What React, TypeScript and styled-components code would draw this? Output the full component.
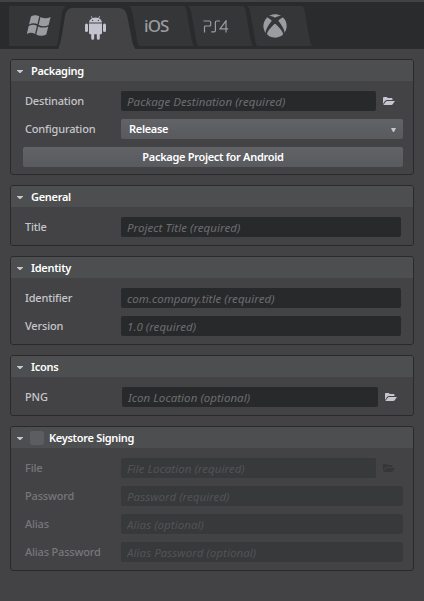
import React from 'react';
import styled, { createGlobalStyle, css } from 'styled-components';
import { FaXbox } from 'react-icons/fa';

const GlobalStyle = createGlobalStyle`
  * { box-sizing: border-box; }
  body { margin: 0; background: #434345; }
  button, input { font: inherit; }
`;

const Window = styled.main`
  width: 424px;
  height: 601px;
  overflow: hidden;
  background: #434345;
  color: #c6c6cc;
  font: 500 11px/20px 'Noto Sans', 'Open Sans', sans-serif;
`;

const TabBar = styled.nav`
  display: flex;
  align-items: flex-start;
  height: 47px;
  margin-top: 2px;
  padding: 0 0 0 9px;
  background: #2a2b2d;
`;

const Shell = styled.div`
  display: flow-root;
`;

const TabButton = styled.button<{ $width: number; $overlap: number; $active?: boolean }>`
  position: relative;
  z-index: ${p => (p.$active ? 1 : 0)};
  flex: none;
  width: ${p => p.$width}px;
  height: 47px;
  margin: 0 0 0 -${p => p.$overlap}px;
  padding: 0;
  border: 0;
  background: none;
  color: ${p => (p.$active ? '#c3c4d0' : '#9b9ca2')};
`;

const TabShape = styled.svg`
  position: absolute;
  inset: 0;
  display: block;
`;

const TabFace = styled.span<{ $left: number; $top: number }>`
  position: relative;
  display: block;
  height: 47px;
  padding: ${p => p.$top}px 0 0 ${p => p.$left}px;
  text-align: left;
  svg { display: block; }
`;

const IosText = styled.span`
  display: block;
  font: 500 17px/22px 'Noto Sans', sans-serif;
  letter-spacing: -0.9px;
`;

const Stack = styled.div`
  display: flex;
  flex-direction: column;
  gap: 10px;
  padding: 10px 10px 0;
`;

const Panel = styled.section`
  border: 1px solid #2a2a2c;
  border-radius: 3px;
  overflow: hidden;
`;

const PanelHeader = styled.header`
  display: flex;
  align-items: center;
  height: 21px;
  padding-left: 6px;
  background: #4d4e50;
  color: #fff;
`;

const Caret = styled.svg`
  flex: none;
  margin: 1px 8px 0 0;
  fill: #c6c6cc;
`;

const CheckBox = styled.span`
  width: 14px;
  height: 14px;
  margin: 0 5px 0 -1px;
  border-radius: 2px;
  background: #5c5d61;
`;

const Heading = styled.h2`
  margin: 0;
  font: 600 11px/21px 'Noto Sans', sans-serif;
  letter-spacing: -0.3px;
  white-space: nowrap;
`;

const PanelBody = styled.div<{ $bottom?: number; $disabled?: boolean }>`
  display: flex;
  flex-direction: column;
  gap: 8px;
  padding: 10px 10px ${p => p.$bottom ?? 8}px 12px;
  ${p => p.$disabled && css`color: #77777b;`}
`;

const Row = styled.div<{ $shift?: number }>`
  display: grid;
  grid-template-columns: ${p => 98 + (p.$shift ?? 0)}px auto 1fr;
  height: 20px;
`;

const Label = styled.label`
  padding-left: 2px;
  letter-spacing: -0.18px;
  white-space: nowrap;
`;

const Input = styled.input<{ $width: number }>`
  width: ${p => p.$width}px;
  height: 20px;
  padding: 2px 6px 0;
  border: 0;
  border-radius: 2px;
  background: #28292b;
  color: #c6c6cc;
  font-size: 11.5px;
  font-weight: 400;
  letter-spacing: 0.05px;
  &::placeholder { color: #6d6d70; font-style: italic; opacity: 1; }
  &:disabled { background: #38393b; }
  &:disabled::placeholder { color: #535356; }
`;

const raised = css`
  height: 20px;
  border: 0;
  border-radius: 2px;
  background: linear-gradient(#626367, #595a5e);
  color: #fff;
  font-weight: 600;
  letter-spacing: -0.3px;
`;

const Select = styled.button`
  ${raised}
  display: flex;
  justify-content: space-between;
  align-items: center;
  width: 282px;
  padding: 0 7px 0 8px;
  line-height: 20px;
`;

const SelectArrow = styled.svg`
  flex: none;
  margin-top: 1px;
  fill: #c6c6cc;
`;

const ActionButton = styled.button`
  ${raised}
  width: 380px;
  padding: 0;
  line-height: 20px;
`;

const FolderButton = styled.button`
  display: flex;
  padding: 6px 0 0 6px;
  border: 0;
  background: none;
  color: #c6c6d0;
  &:disabled { color: #353638; }
`;

const FolderIcon = () => (
  <svg width="14" height="9" viewBox="0 0 14 9" fill="currentColor">
    <path d="M1 7V1Q1 0 2 0H4.5Q5.5 0 5.5 1H9.5Q10.5 1 10.5 2V3H5Q3.8 3 3 4Z" />
    <path d="M5 4H13L10.7 7.3Q10.2 8 9.2 8H1.3L3.9 4.6Q4.3 4 5 4Z" />
  </svg>
);

const WindowsIcon = () => (
  <svg width="24" height="22" viewBox="0 0 24 22" fill="currentColor">
    <path d="M4 1.5Q8-1 12.3 1.3L10.4 9.2Q6.4 7 2 9.6Z" />
    <path d="M13.5 2Q18.6 4.6 23.6 2L21.6 10Q16.9 12.4 11.6 9.9Z" />
    <path d="M1.7 11Q5.8 8.5 10 10.7L8 19Q4 16.7-.2 19.1Z" />
    <path d="M11.2 11.4Q16.3 13.8 21.3 11.4L19.3 19.5Q14.2 22 9.2 19.6Z" />
  </svg>
);

const AndroidIcon = () => (
  <svg width="21" height="24" viewBox="0 0 21 24" fill="currentColor">
    <path d="M4 6.6C4.2 4.5 5.4 3 7.1 2.2L5.8.4L6.3 0L7.7 1.9Q10.5 1 13.3 1.9L14.7 0L15.2.4L13.9 2.2C15.6 3 16.8 4.5 17 6.6Z" />
    <path d="M4 7.6H17V17Q17 18.2 15.8 18.2H14.8V22.2Q14.8 23.7 13.3 23.7T11.8 22.2V18.2H9.2V22.2Q9.2 23.7 7.7 23.7T6.2 22.2V18.2H5.2Q4 18.2 4 17Z" />
    <rect y="7.5" width="3" height="8.5" rx="1.5" />
    <rect x="18" y="7.5" width="3" height="8.5" rx="1.5" />
    <circle cx="7.6" cy="4.4" r=".65" fill="#434345" />
    <circle cx="13.4" cy="4.4" r=".65" fill="#434345" />
  </svg>
);

const PlayStationIcon = () => (
  <svg width="26" height="13" viewBox="0 0 26 13" fill="none" stroke="currentColor" strokeWidth="1.2">
    <path d="M.5 1H6.4Q7.7 1 7.7 2.3V4.8Q7.7 6 6.4 6H2.5Q1.5 6 1.5 7V12.4" />
    <path d="M17 1H13.6Q12.4 1 12.4 2.2V10.5Q12.4 11.8 11.2 11.8H8.2" />
    <path d="M23 12.4V.8L17 8.8H25.2" />
  </svg>
);

type FieldProps = {
  label: string;
  hint: string;
  width: number;
  browse?: boolean;
  disabled?: boolean;
  shift?: number;
};

function Field({ label, hint, width, browse, disabled, shift }: FieldProps) {
  return (
    <Row $shift={shift}>
      <Label>{label}</Label>
      <Input $width={width} placeholder={hint} disabled={disabled} />
      {browse && <FolderButton disabled={disabled}><FolderIcon /></FolderButton>}
    </Row>
  );
}

type GroupProps = {
  title: string;
  checkbox?: boolean;
  bottom?: number;
  disabled?: boolean;
  children: React.ReactNode;
};

function Group({ title, checkbox, bottom, disabled, children }: GroupProps) {
  return (
    <Panel>
      <PanelHeader>
        <Caret width="6" height="3" viewBox="0 0 6 3"><path d="M0 0H6V.6L3.5 3H2.5L0 .6Z" /></Caret>
        {checkbox && <CheckBox />}
        <Heading>{title}</Heading>
      </PanelHeader>
      <PanelBody $bottom={bottom} $disabled={disabled}>{children}</PanelBody>
    </Panel>
  );
}

const slanted = 'M0 4H54Q56.5 4 57.3 7L61.5 32Q62.8 40 65 44H11Q9.2 44 8.3 39L3 9Q2 5 0 4Z';

type TabProps = {
  width: number;
  overlap: number;
  shape: string;
  left: number;
  top: number;
  active?: boolean;
  children: React.ReactNode;
};

function Tab({ width, overlap, shape, left, top, active, children }: TabProps) {
  return (
    <TabButton $width={width} $overlap={overlap} $active={active}>
      <TabShape width={width} height="47" viewBox={`0 0 ${width} 47`}>
        <path d={shape} fill={active ? '#434345' : '#353638'} />
      </TabShape>
      <TabFace $left={left} $top={top}>{children}</TabFace>
    </TabButton>
  );
}

export default function App() {
  return (
    <Window>
      <GlobalStyle />
      <Shell>
        <TabBar>
          <Tab width={58} overlap={0} left={18} top={13} shape="M1 4H57Q54 6 53 11L49 40Q48.5 44 46 44H1Q0 44 0 43V5Q0 4 1 4Z">
            <WindowsIcon />
          </Tab>
          <Tab width={78} overlap={9} left={27} top={14} active shape="M0 47Q2.3 42 3.3 36L7 14Q8.6 6 14 6H61Q67 6 69 13L74 38Q75 44 77.5 47Z">
            <AndroidIcon />
          </Tab>
          <Tab width={66} overlap={7} left={15} top={13} shape={slanted}>
            <IosText>iOS</IosText>
          </Tab>
          <Tab width={66} overlap={7} left={15} top={18} shape={slanted}>
            <PlayStationIcon />
          </Tab>
          <Tab width={66} overlap={7} left={16} top={12} shape={slanted}>
            <FaXbox size={24} />
          </Tab>
        </TabBar>
      </Shell>
      <Stack>
        <Group title="Packaging" bottom={7}>
          <Field label="Destination" hint="Package Destination (required)" width={255} browse />
          <Row>
            <Label>Configuration</Label>
            <Select>Release<SelectArrow width="5" height="4" viewBox="0 0 5 4"><path d="M0 0H5L3 4H2Z" /></SelectArrow></Select>
          </Row>
          <ActionButton>Package Project for Android</ActionButton>
        </Group>
        <Group title="General">
          <Field label="Title" hint="Project Title (required)" width={280} />
        </Group>
        <Group title="Identity">
          <Field label="Identifier" hint="com.company.title (required)" width={280} />
          <Field label="Version" hint="1.0 (required)" width={280} />
        </Group>
        <Group title="Icons">
          <Field label="PNG" hint="Icon Location (optional)" width={256} browse shift={1} />
        </Group>
        <Group title="Keystore Signing" checkbox disabled>
          <Field label="File" hint="File Location (required)" width={255} browse disabled />
          <Field label="Password" hint="Password (required)" width={282} disabled />
          <Field label="Alias" hint="Alias (optional)" width={282} disabled />
          <Field label="Alias Password" hint="Alias Password (optional)" width={282} disabled />
        </Group>
      </Stack>
    </Window>
  );
}
